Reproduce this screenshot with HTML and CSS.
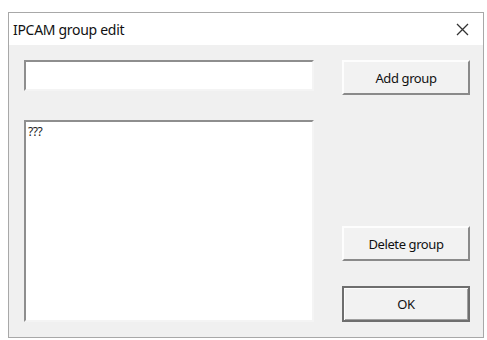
FILE: index.html
```html
<!DOCTYPE html>
<html lang="en">
<head>
    <meta charset="UTF-8">
    <title>IPCAM group edit</title>
    <link rel="stylesheet" href="styles.css">
</head>
<body>
    <div class="dialog">
        <div class="titlebar">
            <span class="title">IPCAM group edit</span>
            <span class="close">
                <svg width="13" height="13" viewBox="0 0 13 13">
                    <path d="M1 1 L12 12 M12 1 L1 12" stroke="#333" stroke-width="1.3" fill="none"/>
                </svg>
            </span>
        </div>
        <div class="client">
            <div class="left-col">
                <input type="text" class="group-name">
                <div class="group-list">
                    <div class="list-item">???</div>
                </div>
            </div>
            <div class="right-col">
                <button class="btn">Add group</button>
                <div class="spacer"></div>
                <button class="btn">Delete group</button>
                <button class="btn btn-default">OK</button>
            </div>
        </div>
    </div>
</body>
</html>
```

FILE: styles.css
```css
body {
    margin: 0;
    padding: 12px 3px 2px 8px;
    background: #ffffff;
    font-family: "Noto Sans", "Open Sans", sans-serif;
    font-size: 12px;
    color: #222;
}

.dialog {
    width: 474px;
    height: 324px;
    border: 1px solid #a8a8a8;
    display: flex;
    flex-direction: column;
    background: #f0f0f0;
}

.titlebar {
    height: 33px;
    background: #ffffff;
    display: flex;
    align-items: center;
    justify-content: space-between;
    padding: 0 14px 0 4px;
}

.title {
    font-size: 14px;
    color: #111;
    letter-spacing: -0.3px;
}

.close {
    display: flex;
}

.client {
    flex: 1;
    display: flex;
    padding: 15px 14px 15px 15px;
    gap: 28px;
}

.left-col {
    width: 290px;
    display: flex;
    flex-direction: column;
}

.group-name {
    box-sizing: border-box;
    width: 290px;
    height: 31px;
    margin: 0;
    padding: 0 4px;
    background: #fff;
    border: 2px solid;
    border-color: #8e8e8e #f4f4f4 #f4f4f4 #8e8e8e;
    outline: none;
}

.group-list {
    box-sizing: border-box;
    margin-top: 29px;
    height: 202px;
    background: #fff;
    border: 2px solid;
    border-color: #8e8e8e #f4f4f4 #f4f4f4 #8e8e8e;
    padding: 3px 2px;
}

.list-item {
    font-size: 12px;
    line-height: 14px;
    color: #222;
    letter-spacing: -0.5px;
}

.right-col {
    width: 128px;
    display: flex;
    flex-direction: column;
}

.btn {
    box-sizing: border-box;
    width: 128px;
    height: 35px;
    margin: 0;
    background: #f2f2f2;
    border: 2px solid;
    border-color: #fdfdfd #8a8a8a #8a8a8a #fdfdfd;
    font-family: "Noto Sans", "Open Sans", sans-serif;
    font-size: 13px;
    color: #111;
    letter-spacing: -0.4px;
}

.spacer {
    flex: 1;
}

.btn-default {
    margin-top: 25px;
    height: 36px;
    border: 2px solid #6e6e6e;
    box-shadow: inset 1px 1px 0 #fdfdfd, inset -1px -1px 0 #a0a0a0;
}
```
